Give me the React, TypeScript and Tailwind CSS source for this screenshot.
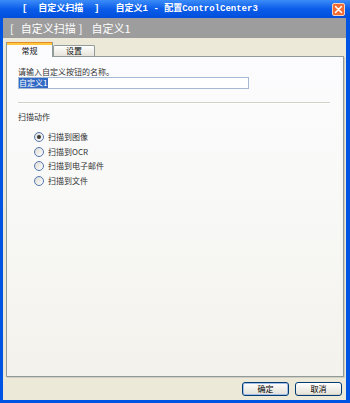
import React from "react";

const cjk = { fontFamily: '"Noto Sans CJK SC", "Noto Sans", sans-serif' };
const mono = { fontFamily: '"Liberation Mono", "Noto Sans CJK SC", monospace' };

function Radio({ checked, label }: { checked?: boolean; label: string }) {
  return (
    <div className="flex h-[14.5px] items-center">
      <div className="ml-[27px] flex h-[10px] w-[10px] items-center justify-center rounded-full border border-[#5577b0] bg-linear-to-br from-[#dcdad2] to-white">
        {checked && <div className="h-[4px] w-[4px] rounded-full bg-[#3a3a3a]" />}
      </div>
      <span className="ml-[4px] text-[8px] leading-[10px] text-[#333]">{label}</span>
    </div>
  );
}

function Button({ label, primary }: { label: string; primary?: boolean }) {
  return (
    <div
      className={
        "flex h-[14px] w-[47px] items-center justify-center rounded-[3px] border border-[#003c74] bg-linear-to-b from-white via-[#f0efea] to-[#e3e1d8] text-[8px] leading-[10px] text-black " +
        (primary ? "shadow-[inset_0_0_0_1px_#a3bde8]" : "shadow-[inset_0_-1px_0_#d6d0c5]")
      }
    >
      {label}
    </div>
  );
}

export default function App() {
  return (
    <div className="flex h-[403px] w-[350px] flex-col bg-[#0054e3]" style={cjk}>
      {/* Title bar */}
      <div className="flex h-[18px] shrink-0 items-center bg-linear-to-b from-[#3b8cf8] via-[#0a5ce9] to-[#004fdc]">
        <span className="ml-[22px] whitespace-pre text-[9px] font-bold leading-[10px] text-white" style={mono}>
          {"[  自定义扫描  ]   自定义1 - 配置ControlCenter3"}
        </span>
        <div className="ml-auto mr-[5px] flex h-[13px] w-[13px] items-center justify-center rounded-[2px] border border-[#f3d2c0] bg-[#f26a30]">
          <svg width="9" height="9" viewBox="0 0 9 9">
            <path d="M1.5 1.5 L7.5 7.5 M7.5 1.5 L1.5 7.5" stroke="#ffffff" strokeWidth="1.6" strokeLinecap="round" />
          </svg>
        </div>
      </div>

      {/* Body */}
      <div className="ml-[3px] mr-[4px] mb-[3px] flex flex-1 flex-col bg-[#ece9d8]">
        <div className="flex h-[20px] shrink-0 items-center bg-[#9d9d9d] text-[11px] leading-[12px] text-white">
          <span className="ml-[7px]">[</span>
          <span className="ml-[7px]">自定义扫描</span>
          <span className="ml-[3px]">]</span>
          <span className="ml-[9px]">自定义1</span>
        </div>

        {/* Tabs */}
        <div className="ml-[3px] mt-[4px] flex h-[14px] items-end">
          <div className="relative z-10 mb-[-1px] flex h-[15px] w-[47px] flex-col border-x border-[#919b9c] bg-[#fcfcfe]">
            <div className="h-[1px] bg-[#e68b2c]" />
            <div className="h-[2px] bg-[#ffc73c]" />
            <div className="flex flex-1 items-center justify-center pb-[1px] text-[8px] leading-[10px] text-[#111]">常规</div>
          </div>
          <div className="flex h-[11px] w-[42px] items-center justify-center rounded-t-[2px] border border-b-0 border-[#919b9c] bg-linear-to-b from-white via-[#f1f0ea] to-[#e6e4dc] text-[8px] leading-[10px] text-[#111]">
            设置
          </div>
        </div>

        {/* Panel */}
        <div className="ml-[3px] flex h-[321px] w-[338px] flex-col border border-[#919b9c] bg-linear-to-b from-[#fcfcfe] via-[#f8f8f6] to-[#f3f2ec] shadow-[1px_1px_0_#d0cec1]">
          <div className="ml-[11px] mt-[10px] h-[10px] text-[8px] leading-[10px] text-[#333]">请输入自定义按钮的名称。</div>
          <div className="ml-[11px] flex h-[12px] w-[231px] items-center border border-[#a5b9d3] bg-white">
            <span className="flex h-[10px] items-center bg-[#316ac5] pr-[1px] text-[8px] leading-[10px] text-white">自定义1</span>
          </div>
          <div className="ml-[11px] mt-[13px] w-[312px] border-t border-b border-t-[#d3d1c4] border-b-white" />
          <div className="ml-[11px] mt-[8px] h-[10px] text-[8px] leading-[10px] text-[#333]">扫描动作</div>
          <div className="mt-[8px] flex flex-col">
            <Radio checked label="扫描到图像" />
            <Radio label="扫描到OCR" />
            <Radio label="扫描到电子邮件" />
            <Radio label="扫描到文件" />
          </div>
        </div>

        {/* Buttons */}
        <div className="mr-[4px] mt-[5px] flex justify-end gap-[6px]">
          <Button primary label="确定" />
          <Button label="取消" />
        </div>
      </div>
    </div>
  );
}
